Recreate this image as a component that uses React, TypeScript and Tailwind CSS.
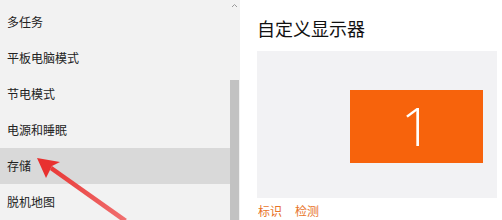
import React from "react";

const items = ["多任务", "平板电脑模式", "节电模式", "电源和睡眠", "存储", "脱机地图"];

export default function App() {
  return (
    <div
      className="relative flex w-[502px] h-[220px] overflow-hidden bg-white"
      style={{ fontFamily: '"Noto Sans CJK SC", "Noto Sans", sans-serif' }}
    >
      {/* left nav */}
      <div className="flex w-[240px] shrink-0 bg-[#f2f2f2]">
        <div className="flex flex-col w-[230px] pt-[4px]">
          {items.map((t) => (
            <div
              key={t}
              className={`flex items-center h-[36px] shrink-0 pl-[7px] text-[12px] text-[#222] ${
                t === "存储" ? "bg-[#d9d9d9]" : ""
              }`}
            >
              {t}
            </div>
          ))}
        </div>
        <div className="flex flex-col items-center w-[9px]">
          <svg width="7" height="5" viewBox="0 0 7 5" className="mt-[3px]">
            <path d="M1 4 L3.5 1.5 L6 4" fill="none" stroke="#9a9a9a" strokeWidth="1" />
          </svg>
          <div className="mt-[72px] w-[9px] flex-1 bg-[#c2c2c2]" />
        </div>
        <div className="w-[1px]" />
      </div>

      {/* right pane */}
      <div className="flex flex-col flex-1 pl-[17px] pt-[15px]">
        <div className="text-[18px] leading-[26px] text-[#111]">自定义显示器</div>
        <div className="mt-[10px] flex justify-end w-[240px] h-[151px] bg-[#f2f2f4] pt-[39px] pr-[14px]">
          <div className="flex items-center justify-center w-[133px] h-[73px] bg-[#f7630c]">
            <span
              className="text-[54px] leading-none font-thin text-white -mt-[4px]"
              style={{ fontFamily: '"Open Sans", "Noto Sans", sans-serif' }}
            >
              1
            </span>
          </div>
        </div>
        <div className="flex gap-[13px] mt-[4px] pl-[1px] text-[12px] text-[#e8742a]">
          <span>标识</span>
          <span>检测</span>
        </div>
      </div>

      {/* red arrow */}
      <svg
        className="absolute left-0 top-0 pointer-events-none"
        width="502"
        height="220"
        viewBox="0 0 502 220"
      >
        <defs>
          <linearGradient id="ag" x1="125" y1="222" x2="40" y2="160" gradientUnits="userSpaceOnUse">
            <stop offset="0" stopColor="#f07070" />
            <stop offset="1" stopColor="#e8312f" />
          </linearGradient>
        </defs>
        <path d="M123 222 L127 219 L52 166 L50 170 Z" fill="url(#ag)" />
        <path d="M37 158 L60 162 L52 166 L50 170 L46 178 Z" fill="#e8312f" />
      </svg>
    </div>
  );
}
